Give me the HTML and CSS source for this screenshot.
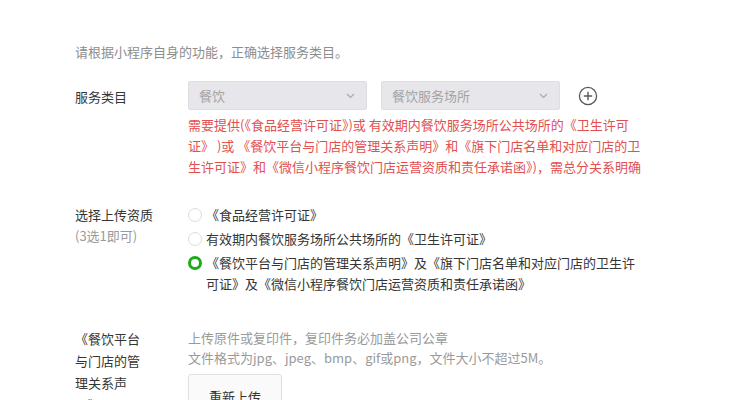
FILE: index.html
```html
<!DOCTYPE html>
<html lang="zh-CN">
<head>
  <meta charset="UTF-8">
  <meta name="viewport" content="width=device-width, initial-scale=1.0">
  <title>服务类目</title>
  <link rel="stylesheet" href="styles.css">
</head>
<body>
  <div class="page">
    <p class="intro">请根据小程序自身的功能，正确选择服务类目。</p>

    <div class="form-row category-row">
      <div class="form-label label-mid">服务类目</div>
      <div class="form-body">
        <div class="select-group">
          <div class="select">
            <span>餐饮</span>
            <svg class="chevron" width="9" height="6" viewBox="0 0 9 6"><path d="M1 1l3.5 3.5L8 1" fill="none" stroke="#aaa" stroke-width="1.2"/></svg>
          </div>
          <div class="select">
            <span>餐饮服务场所</span>
            <svg class="chevron" width="9" height="6" viewBox="0 0 9 6"><path d="M1 1l3.5 3.5L8 1" fill="none" stroke="#aaa" stroke-width="1.2"/></svg>
          </div>
          <svg class="add-icon" width="20" height="20" viewBox="0 0 20 20">
            <circle cx="10" cy="10" r="8.6" fill="none" stroke="#5a5a5a" stroke-width="1.3"/>
            <path d="M10 5.8v8.4M5.8 10h8.4" stroke="#5a5a5a" stroke-width="1.4"/>
          </svg>
        </div>
        <p class="warn">需要提供(《食品经营许可证》)或 有效期内餐饮服务场所公共场所的《卫生许可证》 )或 《餐饮平台与门店的管理关系声明》和《旗下门店名单和对应门店的卫生许可证》和《微信小程序餐饮门店运营资质和责任承诺函》)，需总分关系明确</p>
      </div>
    </div>

    <div class="form-row qual-row">
      <div class="form-label">选择上传资质<br><span class="sub">(3选1即可)</span></div>
      <div class="form-body">
        <ul class="radio-list">
          <li class="radio-item"><span class="radio"></span><span class="radio-text">《食品经营许可证》</span></li>
          <li class="radio-item"><span class="radio"></span><span class="radio-text">有效期内餐饮服务场所公共场所的《卫生许可证》</span></li>
          <li class="radio-item"><span class="radio checked"></span><span class="radio-text">《餐饮平台与门店的管理关系声明》及《旗下门店名单和对应门店的卫生许可证》及《微信小程序餐饮门店运营资质和责任承诺函》</span></li>
        </ul>
      </div>
    </div>

    <div class="form-row upload-row">
      <div class="form-label narrow">《餐饮平台与门店的管理关系声明》</div>
      <div class="form-body">
        <p class="tips">上传原件或复印件，复印件务必加盖公司公章<br>文件格式为jpg、jpeg、bmp、gif或png，文件大小不超过5M。</p>
        <button class="btn">重新上传</button>
      </div>
    </div>
  </div>
</body>
</html>
```

FILE: styles.css
```css
html, body {
  margin: 0;
  background-color: #fff;
  font-family: "Noto Sans CJK SC", "Liberation Sans", sans-serif;
  font-size: 13px;
  color: #353535;
}

.page {
  padding: 42px 0 0 75px;
}

.intro {
  margin: 0;
  line-height: 20px;
  color: #8d8d8d;
}

.form-row {
  display: flex;
}

.form-label {
  width: 113px;
  flex-shrink: 0;
  line-height: 21px;
}

.form-label .sub {
  color: #9a9a9a;
}

.label-mid {
  padding-top: 5px;
}

.narrow {
  width: 68px;
  margin-right: 45px;
  line-height: 22px;
}

.category-row {
  margin-top: 19px;
}

.select-group {
  display: flex;
  align-items: center;
}

.select {
  width: 179px;
  height: 29px;
  box-sizing: border-box;
  margin-right: 14px;
  padding: 0 10px;
  display: flex;
  align-items: center;
  justify-content: space-between;
  background-color: #e7e7eb;
  border: 1px solid #dedee2;
  border-radius: 2px;
  color: #a3a3a3;
}

.chevron {
  margin-right: 1px;
}

.add-icon {
  margin-left: 4px;
}

.warn {
  margin: 4px 0 0;
  width: 462px;
  line-height: 21px;
  color: #e25050;
}

.qual-row {
  margin-top: 27px;
}

.radio-list {
  list-style: none;
  margin: 0;
  padding: 0;
  display: flex;
  flex-direction: column;
  gap: 3px;
}

.radio-item {
  display: flex;
  line-height: 21px;
}

.radio {
  width: 14px;
  height: 14px;
  box-sizing: border-box;
  margin: 4px 4px 0 0;
  flex-shrink: 0;
  border: 1px solid #dcdcdc;
  border-radius: 50%;
}

.radio.checked {
  border: 3.5px solid #1aad19;
}

.radio-text {
  width: 432px;
}

.upload-row {
  margin-top: 34px;
}

.tips {
  margin: 0;
  line-height: 20px;
  color: #9a9a9a;
}

.btn {
  margin-top: 6px;
  width: 94px;
  height: 44px;
  background-color: #fafafa;
  border: 1px solid #e0e0e0;
  border-radius: 3px;
  font-family: inherit;
  font-size: 13px;
  color: #353535;
}
```
